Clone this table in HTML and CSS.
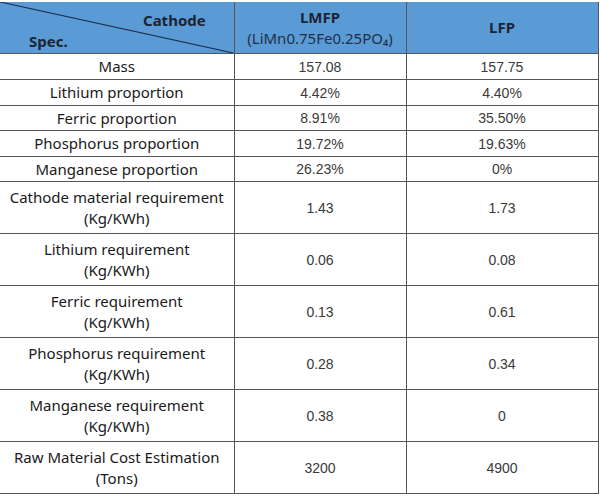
FILE: index.html
```html
<!DOCTYPE html>
<html>
<head>
<meta charset="utf-8">
<link rel="stylesheet" href="styles.css">
</head>
<body>
<table class="spec">
  <colgroup>
    <col class="c1"><col class="c2"><col class="c3">
  </colgroup>
  <thead>
    <tr class="head">
      <th class="corner">
        <svg class="diag" viewBox="0 0 234 51" preserveAspectRatio="none"><line x1="0" y1="0" x2="234" y2="51"/></svg>
        <span class="cathode">Cathode</span>
        <span class="specl">Spec.</span>
      </th>
      <th><div class="b">LMFP</div><div class="formula">(LiMn0.75Fe0.25PO₄)</div></th>
      <th><div class="b">LFP</div></th>
    </tr>
  </thead>
  <tbody>
    <tr class="s tall"><td class="lab">Mass</td><td>157.08</td><td>157.75</td></tr>
    <tr class="s tall"><td class="lab">Lithium proportion</td><td>4.42%</td><td>4.40%</td></tr>
    <tr class="s"><td class="lab">Ferric proportion</td><td>8.91%</td><td>35.50%</td></tr>
    <tr class="s tall"><td class="lab">Phosphorus proportion</td><td>19.72%</td><td>19.63%</td></tr>
    <tr class="s"><td class="lab">Manganese proportion</td><td>26.23%</td><td>0%</td></tr>
    <tr class="d"><td class="lab">Cathode material requirement<br>(Kg/KWh)</td><td>1.43</td><td>1.73</td></tr>
    <tr class="d"><td class="lab">Lithium requirement<br>(Kg/KWh)</td><td>0.06</td><td>0.08</td></tr>
    <tr class="d"><td class="lab">Ferric requirement<br>(Kg/KWh)</td><td>0.13</td><td>0.61</td></tr>
    <tr class="d"><td class="lab">Phosphorus requirement<br>(Kg/KWh)</td><td>0.28</td><td>0.34</td></tr>
    <tr class="d"><td class="lab">Manganese requirement<br>(Kg/KWh)</td><td>0.38</td><td>0</td></tr>
    <tr class="d"><td class="lab">Raw Material Cost Estimation<br>(Tons)</td><td>3200</td><td>4900</td></tr>
  </tbody>
</table>
</body>
</html>
```

FILE: styles.css
```css
html, body {
  margin: 0;
  padding: 0;
  background: #ffffff;
}
body {
  padding-top: 2px;
}
.spec {
  border-collapse: collapse;
  table-layout: fixed;
  width: 598px;
  font-family: "Liberation Sans", Arial, sans-serif;
  font-size: 14px;
  color: #3a3a3a;
}
.c1 { width: 234px; }
.c2 { width: 172px; }
.c3 { width: 192px; }
.spec th, .spec td {
  border: 1px solid #555555;
  padding: 0;
  text-align: center;
  vertical-align: middle;
}
.spec tr > :first-child { border-left: none; }
.head th {
  background: #5b9bd5;
  height: 51px;
  border-top: none;
  color: #1b2433;
  font-family: "Noto Sans", sans-serif;
  font-size: 15px;
  font-weight: 400;
  line-height: 21px;
}
.head .b { font-weight: 700; }
.head .formula {
  color: #1f2f4a;
}
.corner {
  position: relative;
  text-align: left;
}
.diag {
  position: absolute;
  left: 0;
  top: 0;
  width: 100%;
  height: 100%;
}
.diag line {
  stroke: #1d2e4a;
  stroke-width: 1.2;
}
.cathode {
  position: absolute;
  left: 143px;
  top: 8px;
  font-weight: 700;
}
.specl {
  position: absolute;
  left: 29px;
  top: 29px;
  font-weight: 700;
}
.s td { height: 24px; }
.s.tall td { height: 25px; }
.d td { height: 51px; }
.lab {
  font-family: "Noto Sans", sans-serif;
  font-size: 15px;
  color: #1a1a1a;
  line-height: 21px;
}
```
